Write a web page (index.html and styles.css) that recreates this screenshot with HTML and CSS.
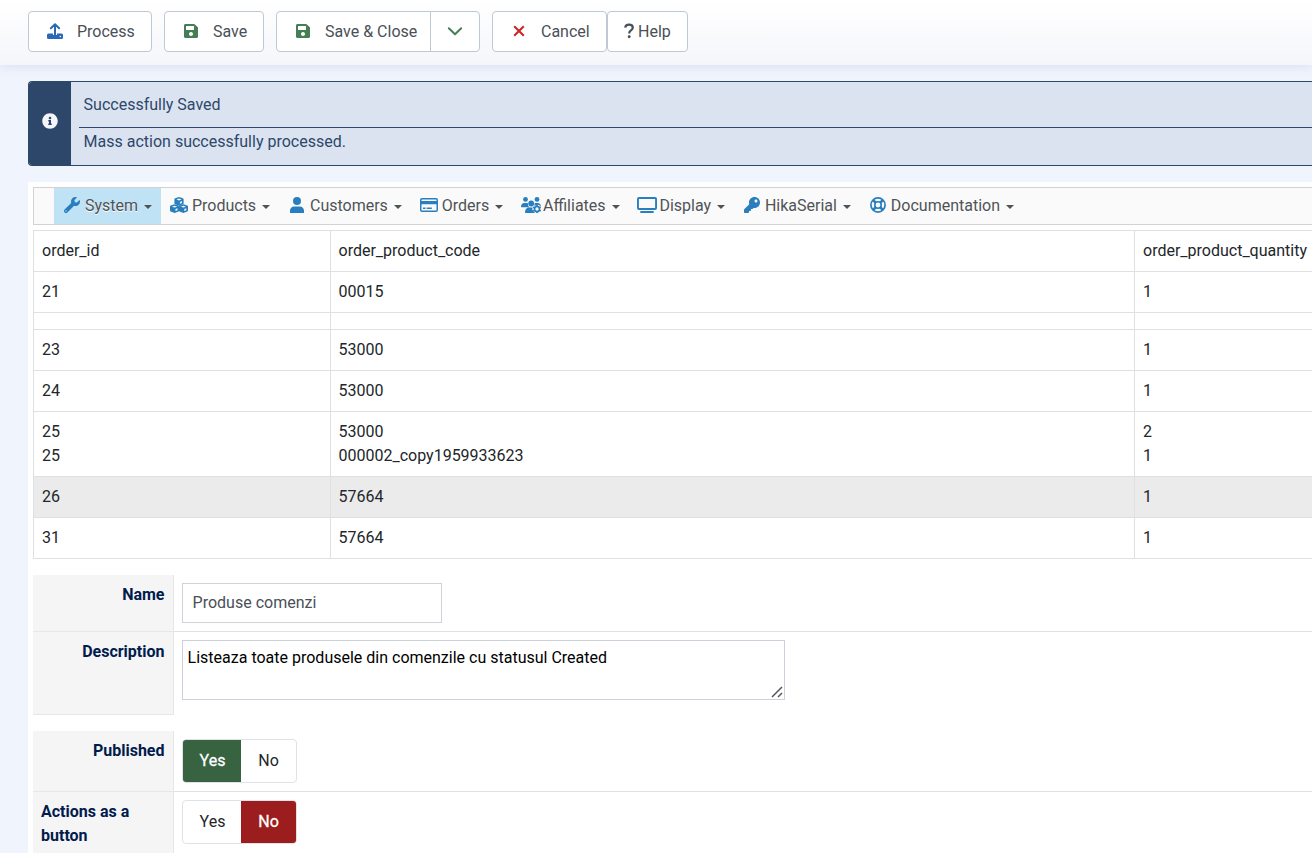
FILE: index.html
```html
<!DOCTYPE html>
<html lang="en">
<head>
<meta charset="utf-8">
<title>Mass action</title>
<link rel="stylesheet" href="styles.css">
</head>
<body>
<svg class="defs" width="0" height="0">
  <symbol id="save" viewBox="0 0 448 512"><path d="M433.941 129.941l-83.882-83.882A48 48 0 0 0 316.118 32H48C21.49 32 0 53.49 0 80v352c0 26.51 21.49 48 48 48h352c26.51 0 48-21.49 48-48V163.882a48 48 0 0 0-14.059-33.941zM224 416c-35.346 0-64-28.654-64-64 0-35.346 28.654-64 64-64s64 28.654 64 64c0 35.346-28.654 64-64 64zm96-304.52V212c0 6.627-5.373 12-12 12H76c-6.627 0-12-5.373-12-12V108c0-6.627 5.373-12 12-12h228.52c3.183 0 6.235 1.264 8.485 3.515l3.48 3.48A11.996 11.996 0 0 1 320 111.48z"/></symbol>
</svg>
<header class="toolbar">
  <button class="btn process"><svg class="upload" width="16" height="16" viewBox="0 0 16 16"><path d="M1.500 10.600H6V12h4v-1.400h4.500A1.500 1.500 0 0 1 16 12.100v2.400a1.500 1.500 0 0 1-1.500 1.500h-13A1.500 1.500 0 0 1 0 14.500v-2.400a1.500 1.500 0 0 1 1.500-1.500zM13.300 12.700a.8.8 0 1 0 0 1.600.8.8 0 0 0 0-1.600z" fill-rule="evenodd"/><path d="M8 11.500V1.500M3.900 5.300L8 1.300l4.100 4" fill="none" stroke="currentColor" stroke-width="2" stroke-linecap="round" stroke-linejoin="round"/></svg><span>Process</span></button>
  <button class="btn save"><svg class="green" width="14" height="16"><use href="#save"/></svg><span>Save</span></button>
  <div class="group">
    <button class="btn save-close"><svg class="green" width="14" height="16"><use href="#save"/></svg><span>Save &amp; Close</span></button>
    <button class="btn more" aria-label="More"><svg class="green" width="16" height="16" viewBox="0 0 16 16"><path d="M1.800 5.200L8 11.200l6.200-6" fill="none" stroke="currentColor" stroke-width="1.900" stroke-linecap="round" stroke-linejoin="round"/></svg></button>
  </div>
  <div class="group">
    <button class="btn cancel"><svg class="red" width="12" height="16" viewBox="0 0 12 16"><path d="M1.200 3.200l9.600 9.600M10.800 3.200l-9.600 9.600" fill="none" stroke="currentColor" stroke-width="2.100"/></svg><span>Cancel</span></button>
    <button class="btn help"><svg width="10" height="16" viewBox="0 0 10 16"><path d="M1.200 4.700C1.400 2.900 2.700 1.600 5 1.600c2.200 0 3.800 1.200 3.800 3.100 0 2.700-3.500 2.600-3.500 5.100v.6" fill="none" stroke="currentColor" stroke-width="2.200"/><circle cx="5.200" cy="13.700" r="1.450"/></svg><span>Help</span></button>
  </div>
</header>
<main class="content">
  <section class="alert">
    <div class="alert-icon"><svg width="16" height="16" viewBox="0 0 512 512"><path d="M256 8C119.043 8 8 119.083 8 256c0 136.997 111.043 248 248 248s248-111.003 248-248C504 119.083 392.957 8 256 8zm0 110c23.196 0 42 18.804 42 42s-18.804 42-42 42-42-18.804-42-42 18.804-42 42-42zm56 254c0 6.627-5.373 12-12 12h-88c-6.627 0-12-5.373-12-12v-24c0-6.627 5.373-12 12-12h12v-64h-12c-6.627 0-12-5.373-12-12v-24c0-6.627 5.373-12 12-12h64c6.627 0 12 5.373 12 12v100h12c6.627 0 12 5.373 12 12v24z"/></svg></div>
    <div class="alert-body"><div class="alert-title">Successfully Saved</div><div class="alert-text">Mass action successfully processed.</div></div>
  </section>
  <div class="panel">
    <nav class="menu">
      <a class="item active"><svg width="16" height="16" viewBox="0 0 512 512"><path d="M507.73 109.1c-2.24-9.03-13.54-12.09-20.12-5.51l-74.36 74.36-67.88-11.31-11.31-67.88 74.36-74.36c6.62-6.62 3.43-17.9-5.66-20.16-47.38-11.74-99.55.91-136.58 37.93-39.64 39.64-50.55 97.1-34.05 147.2L18.74 402.76c-24.99 24.99-24.99 65.51 0 90.5 24.99 24.99 65.51 24.99 90.5 0l213.21-213.21c50.12 16.71 107.47 5.68 147.37-34.22 37.07-37.07 49.7-89.32 37.91-136.73zM64 472c-13.25 0-24-10.75-24-24 0-13.26 10.75-24 24-24s24 10.74 24 24c0 13.25-10.75 24-24 24z"/></svg><span>System</span></a>
      <a class="item"><svg width="18" height="16" viewBox="0 0 18 16"><path id="cube" d="M9 0l3.900 1.300q.7.300.7 1v3.900q0 .7-.7 1L9 8.800 5.100 7.200q-.7-.3-.7-1V2.300q0-.7.7-1zM6.400 2.500L9 3.400l2.600-.9L9 1.600zM9.900 6.800l2-.8V4.100l-2 .8z" fill-rule="evenodd"/><use href="#cube" x="-4.400" y="7.200"/><use href="#cube" x="4.400" y="7.200"/></svg><span>Products</span></a>
      <a class="item"><svg width="14" height="16" viewBox="0 0 448 512"><path d="M224 256A128 128 0 1 0 224 0a128 128 0 1 0 0 256zM134 304h180c74 0 134 60 134 134v58q0 16-16 16H16q-16 0-16-16v-58c0-74 60-134 134-134z"/></svg><span>Customers</span></a>
      <a class="item"><svg width="18" height="16" viewBox="0 0 18 16"><path d="M2 1h14a2 2 0 0 1 2 2v10a2 2 0 0 1-2 2H2a2 2 0 0 1-2-2V3a2 2 0 0 1 2-2zM1.500 3v1h15V3q0-.5-.5-.5H2q-.5 0-.5.5zM1.500 7.200V13q0 .5.500.5h14q.5 0 .5-.5V7.200zM3 10.600h2.500v1.300H3zM6.700 10.600h5.100v1.300H6.700z" fill-rule="evenodd"/></svg><span>Orders</span></a>
      <a class="item"><svg class="wide" width="20" height="16" viewBox="0 0 20 16"><circle cx="4.500" cy="2.400" r="2.400"/><circle cx="16" cy="2.400" r="2.400"/><circle cx="10.200" cy="6.500" r="2.900"/><path d="M3.200 6H6q.5 0 .9.200-.2 2.600 1.500 4H.4q-.4 0-.4-.6C.1 7.200 1.500 6 3.200 6zM13.600 6.200q.5-.2 1-.2h2.200c1.700 0 3 1.300 3.200 3.300l-1.200-.8-2-.7-2 .7-1.700.2q.6-1 .5-2.500zM8.200 10.600h3.600l-.6 1.800 1.100 1.500L14 16H4.600q-.6 0-.6-.7c0-2.700 1.800-4.700 4.200-4.700z"/><circle cx="16" cy="12" r="2.500" fill="none" stroke="currentColor" stroke-width="1.700"/><path d="M16 7.700v2M16 14.300v2M12.300 9.900l1.700 1M18 13.100l1.700 1M12.300 14.100l1.700-1M18 10.900l1.700-1" stroke="currentColor" stroke-width="1.700"/></svg><span>Affiliates</span></a>
      <a class="item"><svg class="wide" width="20" height="16" viewBox="0 0 20 16"><path d="M2 0h16a2 2 0 0 1 2 2v9a2 2 0 0 1-2 2H2a2 2 0 0 1-2-2V2a2 2 0 0 1 2-2zM1.900 2v9h16.200V2zM4 14.100h12q.9 0 .9.900t-.9.900H4q-.9 0-.9-.9t.9-.9z" fill-rule="evenodd"/></svg><span>Display</span></a>
      <a class="item"><svg width="16" height="16" viewBox="0 0 512 512"><path d="M512 176.001C512 273.203 433.202 352 336 352c-11.220 0-22.190-1.062-32.827-3.069l-24.012 27.014A23.999 23.999 0 0 1 261.223 384H224v40c0 13.255-10.745 24-24 24h-40v40c0 13.255-10.745 24-24 24H24c-13.255 0-24-10.745-24-24v-78.059c0-6.365 2.529-12.470 7.029-16.971l161.802-161.802C163.108 213.814 160 195.271 160 176 160 78.798 238.797.001 335.999 0 433.488-.001 512 78.511 512 176.001zM336 128c0 26.510 21.490 48 48 48s48-21.490 48-48-21.490-48-48-48-48 21.490-48 48z"/></svg><span>HikaSerial</span></a>
      <a class="item"><svg width="16" height="16" viewBox="0 0 16 16"><g fill="none" stroke="currentColor"><circle cx="8" cy="8" r="7.100" stroke-width="1.700"/><circle cx="8" cy="8" r="3.200" stroke-width="1.600"/><path d="M3 3l2.700 2.700M13 3l-2.700 2.700M3 13l2.700-2.700M13 13l-2.700-2.700" stroke-width="2.600"/></g></svg><span>Documentation</span></a>
    </nav>
    <table class="results">
      <colgroup><col class="c-id"><col class="c-code"><col></colgroup>
      <tr><td>order_id</td><td>order_product_code</td><td>order_product_quantity</td></tr>
      <tr><td>21</td><td>00015</td><td>1</td></tr>
      <tr><td></td><td></td><td></td></tr>
      <tr><td>23</td><td>53000</td><td>1</td></tr>
      <tr><td>24</td><td>53000</td><td>1</td></tr>
      <tr><td>25<br>25</td><td>53000<br>000002_copy1959933623</td><td>2<br>1</td></tr>
      <tr class="hover"><td>26</td><td>57664</td><td>1</td></tr>
      <tr><td>31</td><td>57664</td><td>1</td></tr>
    </table>
    <div class="form">
      <div class="row name"><label class="key">Name</label><div class="value"><input class="text" type="text" value="Produse comenzi"></div></div>
      <div class="row desc"><label class="key">Description</label><div class="value"><div class="area-wrap"><textarea class="area">Listeaza toate produsele din comenzile cu statusul Created</textarea><svg class="grip" width="12" height="12" viewBox="0 0 12 12"><path d="M1 11L11 1M7 11l4-4" fill="none" stroke="currentColor" stroke-width="1.500"/></svg></div></div></div>
    </div>
    <div class="form">
      <div class="row switch"><label class="key">Published</label><div class="value"><div class="toggle"><span class="yes on">Yes</span><span class="no">No</span></div></div></div>
      <div class="row switch tall"><label class="key left">Actions as a button</label><div class="value"><div class="toggle"><span class="yes">Yes</span><span class="no on">No</span></div></div></div>
    </div>
  </div>
</main>
</body>
</html>
```
FILE: styles.css
```css
* { box-sizing: border-box; }
html, body { height: 853px; overflow: hidden; }
body { margin: 0; background: #eff4fd; color: #22262a; font: 16px/24px Roboto, sans-serif; }
svg { flex: none; fill: currentColor; }
.defs { display: block; position: absolute; }

.toolbar { position: relative; display: flex; gap: 12px; height: 65px; padding: 11px 0 0 28px; background: linear-gradient(#fff, #f5f6fb); box-shadow: 0 2px 10px #d9e0f2; }
.group { display: flex; }
.btn { display: flex; align-items: center; height: 41px; margin: 0; padding: 0; background: #fff; border: 1px solid #bfc8d5; border-radius: 4px; color: #495057; font: inherit; white-space: nowrap; }
.btn svg { margin-bottom: 1px; }
.process { width: 124px; padding-left: 18px; gap: 14px; }
.save { width: 100px; padding-left: 19px; gap: 15px; }
.save-close { width: 155px; padding-left: 19px; gap: 15px; border-radius: 4px 0 0 4px; }
.more { width: 50px; margin-left: -1px; justify-content: center; border-radius: 0 4px 4px 0; }
.cancel { width: 115px; padding-left: 20px; gap: 16px; }
.help { width: 81px; padding-left: 16px; gap: 4px; }
.upload { color: #2a69b8; }
.green { color: #457d54; }
.red { color: #ce2626; }

.content { padding: 16px 0 0 28px; }
.alert { display: flex; height: 85px; border: 1px solid #2c486b; border-right: 0; border-radius: 4px 0 0 4px; background: #dce3f0; color: #2c486b; overflow: hidden; }
.alert-icon { display: flex; align-items: center; justify-content: center; width: 42px; padding: 0 1px 5px 0; background: #2d476a; color: #f5f6fa; }
.alert-body { flex: 1; padding-left: 8px; }
.alert-title { height: 46px; padding: 11px 4.6px 0; border-bottom: 1px solid #2c486b; }
.alert-text { padding: 2px 4.600px; }

.panel { height: 700px; margin-top: 16px; padding: 5px 0 0 5px; background: #fff; }
.menu { display: flex; height: 38px; padding-left: 20px; background: #fafafa; border: 1px solid #d2d2d2; border-right: 0; color: #505356; }
.item { display: flex; align-items: center; padding: 0 8.850px 0 9px; white-space: nowrap; text-shadow: 0 1px 0 #fff; }
.item svg { width: 18px; margin: 0 4px 2px 0; color: #287ebe; }
.item svg.wide { width: 20px; margin-right: 2px; }
.item::after { content: ""; margin: 2px 0 0 6px; border: 4px solid transparent; border-top-color: #505356; border-bottom: 0; }
.item.active { background: #bfe2f4; }

.results { width: 1290px; margin-top: 5px; border-collapse: collapse; table-layout: fixed; }
.c-id { width: 297px; }
.c-code { width: 804px; }
.results td { padding: 8px; border: 1px solid #dee0e4; vertical-align: top; white-space: nowrap; }
.results td:nth-child(2) { padding-left: 7.500px; }
.hover { background: #ebebeb; }

.form { margin-top: 16px; }
.row { display: flex; }
.key { flex: none; width: 141px; padding: 8px 8.500px 8px 8px; background: #f5f5f5; border-right: 1px solid #e7e7e7; border-bottom: 1px solid #e7e7e7; color: #001b4c; font-weight: 700; text-align: right; }
.key.left { text-align: left; }
.value { flex: 1; padding: 8px; border-bottom: 1px solid #e0e1e3; }
.name { height: 57px; }
.desc { height: 83px; }
.desc .value { border-bottom: 0; }
.switch { height: 61px; }
.switch.tall { height: 66px; }
.text { display: block; width: 260px; height: 40px; padding: 0 9.600px 2px; border: 1px solid #ced4da; color: #495057; font: inherit; background: #fff; }
.area-wrap { position: relative; width: 603px; }
.area { display: block; width: 603px; height: 60px; padding: 5px 4.600px; border: 1px solid #cdd1dc; color: #000; font: inherit; background: #fff; resize: none; }
.grip { position: absolute; right: 2px; bottom: 2px; color: #555; }
.toggle { display: flex; width: 115px; height: 44px; border: 1px solid #dfe2e6; border-radius: 4px; background: #fff; overflow: hidden; line-height: 42px; text-align: center; }
.yes { width: 58px; padding-left: 1px; }
.no { width: 55px; }
.yes.on { background: #386341; color: #fff; -webkit-text-stroke: .3px #fff; }
.no.on { background: #9b1d1d; color: #fff; -webkit-text-stroke: .3px #fff; }
```
